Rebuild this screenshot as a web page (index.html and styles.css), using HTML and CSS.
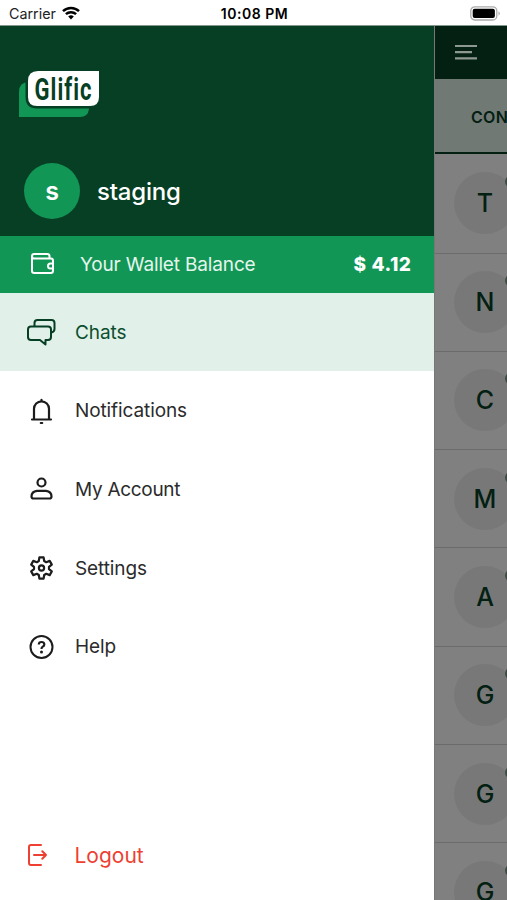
FILE: index.html
```
<!DOCTYPE html>
<html lang="en">
<head>
<meta charset="utf-8">
<title>Glific</title>
<link rel="stylesheet" href="styles.css">
</head>
<body>
<div class="phone">
  <header class="status">
    <div class="carrier"><span>Carrier</span>
      <svg width="18" height="14" viewBox="0 0 18 14" fill="none" stroke="#000" stroke-width="2.5"><path d="M1 5.2a11.5 11.5 0 0 1 16 0M3.9 8.2a7.4 7.4 0 0 1 10.2 0"/><path d="M6.2 10.6a4 4 0 0 1 5.6 0L9 13.4z" fill="#000" stroke="none"/></svg>
    </div>
    <span class="time">10:08 PM</span>
    <svg class="battery" width="31" height="15" viewBox="0 0 31 15"><rect x=".8" y=".8" width="26" height="13.2" rx="4" fill="#fff" stroke="#aaa" stroke-width="1.3"/><rect x="2.7" y="2.7" width="22.2" height="9.4" rx="2"/><path d="M28.5 5.3q2.6 2.2 0 4.4z" fill="#aaa"/></svg>
  </header>
  <div class="screen">
    <nav class="drawer">
      <div class="profile">
        <svg class="logo" width="80" height="46" viewBox="0 0 80 46">
          <path d="M0 46V21Q0 11 10 11H70V38Q69 46 61 46z" fill="#119656"/>
          <path d="M19 0H80V26Q80 35 71 35H18Q9 35 9 26V10Q9 0 19 0z" fill="#fff" stroke="#073f24" stroke-width="5" paint-order="stroke"/>
          <text x="15.5" y="28.5" textLength="58" lengthAdjust="spacingAndGlyphs" class="logo-text">Glific</text>
        </svg>
        <div class="user"><span class="user-avatar">s</span><span class="user-name">staging</span></div>
      </div>
      <div class="wallet">
        <svg width="26" height="24" viewBox="0 0 26 24" fill="none" stroke="#fff" stroke-width="2" stroke-linejoin="round"><path d="M19.500 6.500V4.200Q19.500 2 17.300 2H4.200Q2 2 2 4.200V18.800Q2 21 4.200 21H20.800Q23 21 23 18.800V8.700Q23 6.500 20.800 6.500H4.200Q2 6.500 2 4.200"/><path d="M23 11.500h-2.500a2.500 2.500 0 0 0 0 5H23"/></svg>
        <span class="wallet-label">Your Wallet Balance</span><b class="amount">$ 4.12</b>
      </div>
      <a class="item active">
        <svg width="30" height="28" viewBox="0 0 30 28" fill="none" stroke="#073f24" stroke-width="2" stroke-linejoin="round"><path d="M8.500 8V5Q8.500 2 11.500 2H25.500Q28.500 2 28.500 5V11Q28.500 14 25 14.500"/><path d="M5 8.500H22Q25 8.500 25 11.500V19Q25 22 22 22H19.500V26.500L14 22H5Q2 22 2 19V11.500Q2 8.500 5 8.500z"/></svg>
        <span class="chats">Chats</span></a>
      <a class="item">
        <svg width="30" height="28" viewBox="0 0 30 28" fill="none" stroke="#1c1c1c" stroke-width="2.200" stroke-linecap="round"><path d="M6 22.500H25M8 22V11.800a7.500 7.500 0 0 1 15 0V22M15.500 3.500V2.800M14.800 26H16.200"/></svg>
        <span class="notifications">Notifications</span></a>
      <a class="item">
        <svg width="30" height="28" viewBox="0 0 30 28" fill="none" stroke="#1c1c1c" stroke-width="2.200"><circle cx="15.500" cy="7.500" r="4"/><path d="M11 15.800H20Q25.500 16.500 25.500 21.500Q25.500 23.500 23.500 23.500H7.500Q5.500 23.500 5.500 21.500Q5.500 16.500 11 15.800z"/></svg>
        <span class="account">My Account</span></a>
      <a class="item">
        <svg width="30" height="28" viewBox="-.5 0 30 28" fill="none" stroke="#1c1c1c" stroke-width="2.200" stroke-linejoin="round"><circle cx="15" cy="14" r="2.600"/><path d="M12.900 3.400H17.100L17.700 7L19.700 8.200L23.200 6.900L25.300 10.600L22.500 12.900V15.100L25.300 17.400L23.200 21.100L19.700 19.800L17.700 21L17.100 24.600H12.900L12.300 21L10.300 19.800L6.800 21.100L4.700 17.400L7.500 15.100V12.900L4.700 10.600L6.800 6.900L10.300 8.200L12.300 7z"/></svg>
        <span class="settings">Settings</span></a>
      <a class="item">
        <svg width="30" height="28" viewBox="-.5 0 30 28" fill="none" stroke="#1c1c1c" stroke-width="2"><circle cx="15" cy="14" r="11"/><path d="M12.300 11.500Q12.300 9 15 9Q17.800 9 17.800 11.400Q17.800 12.900 16.300 13.600Q15 14.300 15 16" stroke-width="2.200"/><circle cx="15" cy="19" r="1.500" fill="#1c1c1c" stroke="none"/></svg>
        <span class="help">Help</span></a>
      <a class="logout">
        <svg width="22" height="24" viewBox="0 0 22 24" fill="none" stroke="#ed3f32" stroke-width="2" stroke-linecap="round" stroke-linejoin="round"><path d="M15 2H5Q3 2 3 4V20Q3 22 5 22H15M8 12H20M16.300 8.300L20 12L16.300 15.700"/></svg>
        <span class="logout-label">Logout</span></a>
    </nav>
    <main class="backdrop">
      <div class="topbar"><svg width="24" height="18" viewBox="0 0 24 18" stroke="#8e9892" stroke-width="2.200"><path d="M1 3H23M1 9.200H18M1 15.400H23"/></svg></div>
      <div class="tab">CON</div>
      <div class="row"><span class="avatar">T<i class="dot"></i></span></div>
      <div class="row"><span class="avatar">N<i class="dot"></i></span></div>
      <div class="row"><span class="avatar">C<i class="dot"></i></span></div>
      <div class="row"><span class="avatar">M<i class="dot"></i></span></div>
      <div class="row"><span class="avatar">A<i class="dot"></i></span></div>
      <div class="row"><span class="avatar">G<i class="dot"></i></span></div>
      <div class="row"><span class="avatar">G<i class="dot"></i></span></div>
      <div class="row"><span class="avatar">G<i class="dot"></i></span></div>
    </main>
  </div>
</div>
</body>
</html>
```

FILE: styles.css
```
* { box-sizing: border-box; }
body { margin: 0; background: #fff; font-family: Inter, "Liberation Sans", sans-serif; }
svg { display: block; flex: none; }
.phone { width: 507px; height: 900px; overflow: hidden; display: flex; flex-direction: column; }
.status { height: 26px; flex: none; display: grid; grid-template-columns: 1fr auto 1fr; align-items: center; padding: 1px 7px 0 9px; border-bottom: 1px solid #83978b; color: #000; }
.carrier { display: flex; align-items: center; gap: 6px; font-size: 14.3px; color: #222; }
.time { font-size: 14px; font-weight: 600; letter-spacing: .5px; }
.battery { justify-self: end; margin-right: -1px; }
.screen { flex: 1; min-height: 0; display: flex; }
.drawer { width: 434px; flex: none; display: flex; flex-direction: column; background: #fff; }
.profile { height: 210px; flex: none; background: #073f24; padding: 45px 0 0 19px; }
.logo { overflow: visible; }
.logo-text { font-family: Roboto, sans-serif; font-weight: 700; font-size: 32px; letter-spacing: 1.500px; fill: #073f24; }
.user { display: flex; align-items: center; gap: 17px; margin: 46px 0 0 5px; color: #fff; }
.user-avatar { width: 56px; height: 56px; border-radius: 50%; background: #119656; display: flex; align-items: center; justify-content: center; font-size: 25px; font-weight: 600; }
.user-name { font-size: 24px; font-weight: 500; letter-spacing: -.2px; }
.wallet { height: 56.500px; flex: none; background: #119656; color: #fff; display: flex; align-items: center; padding: 0 23px 0 30px; }
.wallet-label { margin-left: 24px; font-size: 19px; letter-spacing: -.15px; color: #e5f5ec; }
.amount { margin-left: auto; font-size: 19px; font-weight: 800; letter-spacing: .55px; margin-right: -.5px; }
.item { height: 78.600px; flex: none; display: flex; align-items: center; padding: 1px 0 0 26px; gap: 19px; font-size: 19px; letter-spacing: -.1px; color: #2b2b2b; }
.account { letter-spacing: -.3px; }
.active { background: #e1f1ea; color: #0b4f2e; }
.logout { margin-top: auto; height: 90px; display: flex; align-items: center; gap: 26.500px; padding-left: 26px; color: #ed3f32; font-size: 21px; }
.backdrop { flex: 1; min-width: 0; overflow: hidden; background: #808080; border-left: 1px solid #777; color: #032012; }
.topbar { height: 53px; background: #032012; padding: 17px 0 0 19px; }
.tab { height: 75px; background: #717975; border-bottom: 2px solid #032012; display: flex; align-items: center; padding: 2px 0 0 36px; font-size: 16px; font-weight: 600; letter-spacing: .3px; }
.row { height: 98.300px; border-bottom: 1px solid #6b6b6b; display: flex; align-items: center; padding-left: 19px; }
.row:nth-child(3) { height: 99.500px; }
.avatar { position: relative; width: 62px; height: 62px; flex: none; border-radius: 50%; background: #787878; display: flex; align-items: center; justify-content: center; font-size: 25px; line-height: 1; padding-top: 1px; font-weight: 450; }
.dot { position: absolute; left: 51px; top: 3px; width: 13px; height: 13px; border-radius: 50%; background: #3e4b44; }
```
